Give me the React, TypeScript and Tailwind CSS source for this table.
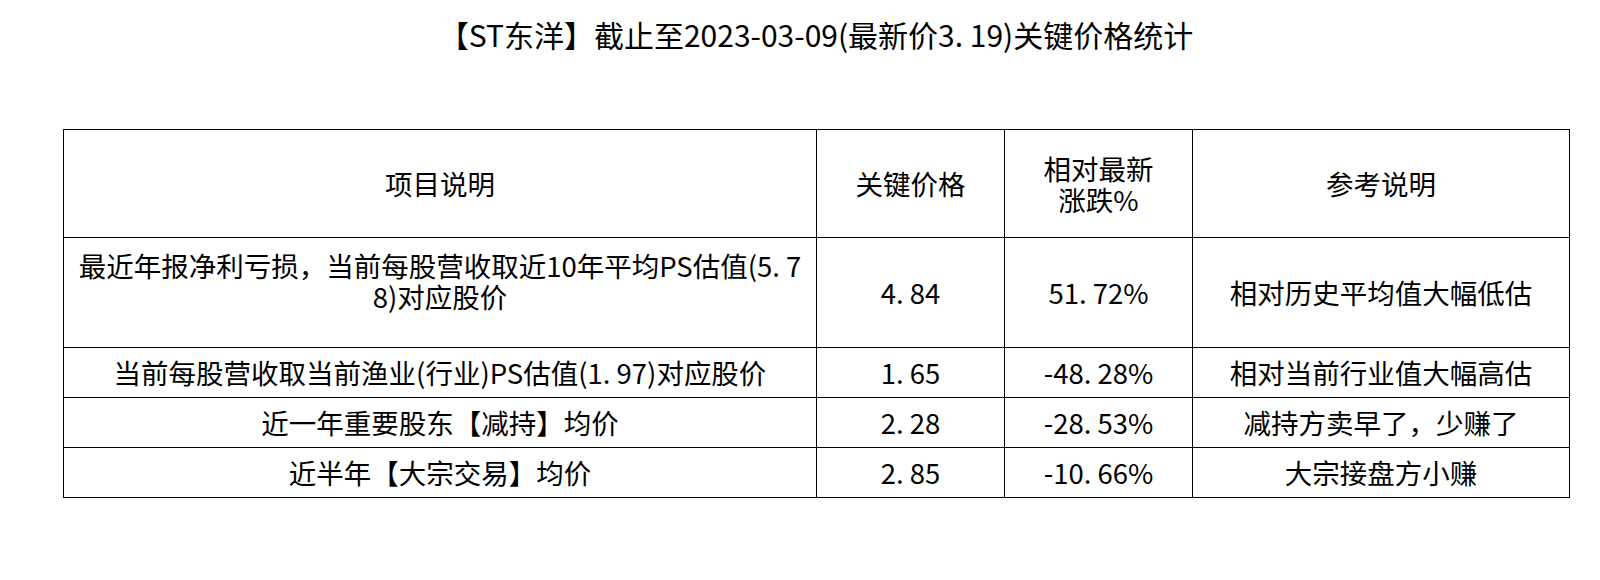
import React from "react";

const font = {
  fontFamily: '"Liberation Sans Narrow", "Noto Sans CJK SC", sans-serif',
};

const cell = "border-[1.5px] border-black text-center align-middle";

export default function App() {
  return (
    <div className="w-[1600px] h-[580px] bg-white text-black overflow-hidden" style={font}>
      <div className="pt-[15px] h-[129px] pl-[63px] w-[1569px]">
        <div className="text-center text-[30px] leading-[38px]">
          【ST东洋】截止至2023-03-09(最新价3.&nbsp;19)关键价格统计
        </div>
      </div>
      <div className="pl-[63px]">
        <table className="border-collapse text-[27.5px] leading-[31px]">
          <colgroup>
            <col className="w-[753px]" />
            <col className="w-[188px]" />
            <col className="w-[188px]" />
            <col className="w-[377px]" />
          </colgroup>
          <tbody>
            <tr className="h-[108px]">
              <td className={cell}>项目说明</td>
              <td className={cell}>关键价格</td>
              <td className={cell}>
                相对最新
                <br />
                涨跌%
              </td>
              <td className={cell}>参考说明</td>
            </tr>
            <tr className="h-[110px]">
              <td className={cell}>
                <div className="pb-[24px] whitespace-nowrap">
                  最近年报净利亏损，当前每股营收取近10年平均PS估值(5.&nbsp;7
                  <br />
                  8)对应股价
                </div>
              </td>
              <td className={cell}>4.&nbsp;84</td>
              <td className={cell}>51.&nbsp;72%</td>
              <td className={cell}>相对历史平均值大幅低估</td>
            </tr>
            <tr className="h-[50px]">
              <td className={`${cell} whitespace-nowrap`}>
                当前每股营收取当前渔业(行业)PS估值(1.&nbsp;97)对应股价
              </td>
              <td className={cell}>1.&nbsp;65</td>
              <td className={cell}>-48.&nbsp;28%</td>
              <td className={cell}>相对当前行业值大幅高估</td>
            </tr>
            <tr className="h-[50px]">
              <td className={cell}>近一年重要股东【减持】均价</td>
              <td className={cell}>2.&nbsp;28</td>
              <td className={cell}>-28.&nbsp;53%</td>
              <td className={cell}>减持方卖早了，少赚了</td>
            </tr>
            <tr className="h-[50px]">
              <td className={cell}>近半年【大宗交易】均价</td>
              <td className={cell}>2.&nbsp;85</td>
              <td className={cell}>-10.&nbsp;66%</td>
              <td className={cell}>大宗接盘方小赚</td>
            </tr>
          </tbody>
        </table>
      </div>
    </div>
  );
}
